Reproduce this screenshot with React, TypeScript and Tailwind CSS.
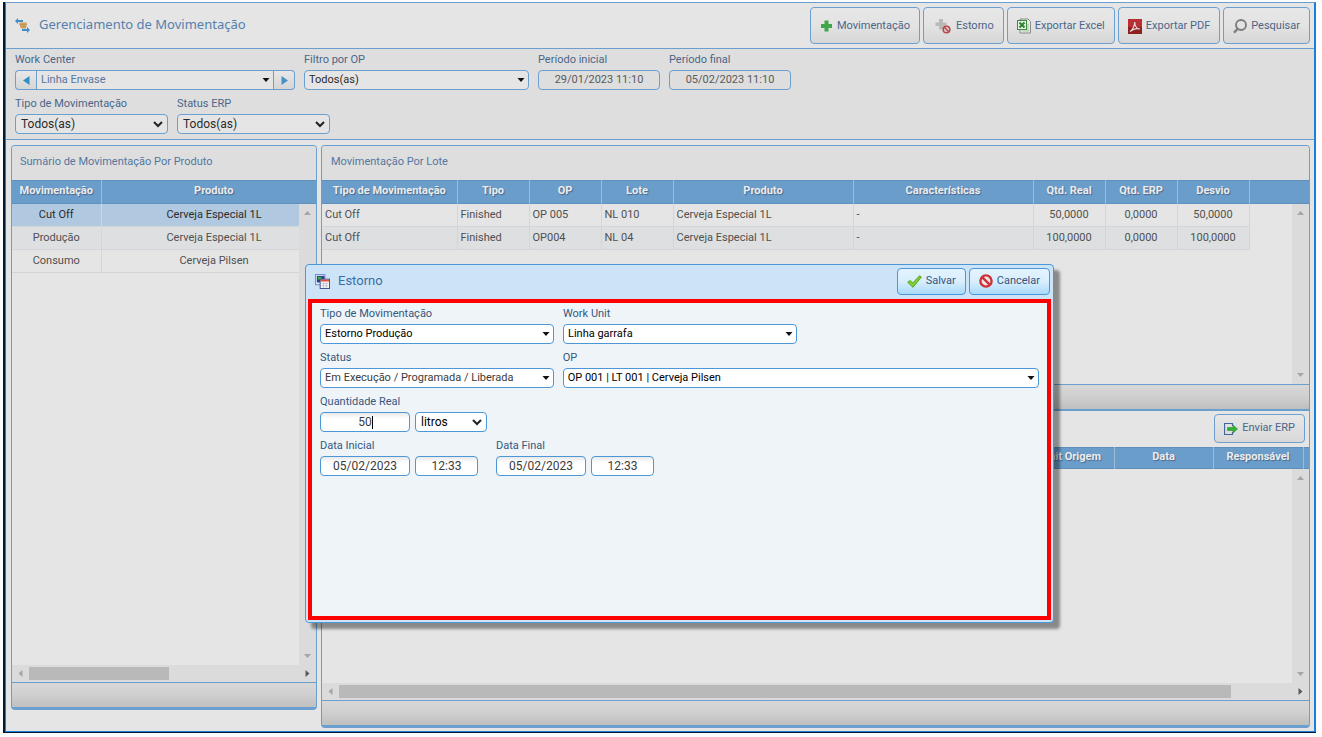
import React, { useState } from "react";

const MovementIcon = () => (
  <svg width="15" height="15" viewBox="0 0 15 15">
    <path d="M0 3l3-3v2h5v2H3v2z" fill="#3f8fd0" />
    <path d="M15 12l-3-3v2H7v2h5v2z" fill="#3f8fd0" />
    <path d="M4 4.500h8l-1 6H6z" fill="#d2a05f" />
    <path d="M4 6.500h8M5 8.500h6" stroke="#b88a50" strokeWidth="0.500" />
  </svg>
);

const PlusIcon = () => (
  <svg width="13" height="14" viewBox="0 0 13 14">
    <path d="M4.500 1.500h4V5H12v4H8.500v3.500h-4V9H1V5h3.500z" fill="#3fa64b" />
  </svg>
);

const ReverseIcon = () => (
  <svg className="mx-px" width="17" height="16" viewBox="0 0 17 16">
    <path d="M5 1h4v3.500h3.500V8H9v3.500H5V8H1.500V4.500H5z" fill="#b9b9b9" />
    <circle cx="12.500" cy="11.500" r="3.300" fill="#e3d3d3" stroke="#b94a4a" strokeWidth="1.600" />
    <path d="M10.200 9.200l4.600 4.600" stroke="#b94a4a" strokeWidth="1.600" />
  </svg>
);

const ExcelIcon = () => (
  <svg width="14" height="16" viewBox="0 0 14 16">
    <path d="M3 1h8l2.500 2.500V15H3z" fill="#e9e9e9" stroke="#8a8a8a" />
    <path d="M11 6v7M5 13h7" stroke="#a9c8a9" />
    <rect x="0.500" y="2.500" width="9" height="9" fill="#e8f1e8" stroke="#3b8a3f" />
    <path d="M2.500 4.500l5 5M7.500 4.500l-5 5" stroke="#2f8535" strokeWidth="2.200" />
  </svg>
);

const PdfIcon = () => (
  <svg width="14" height="15" viewBox="0 0 14 15">
    <rect width="14" height="15" fill="#b83034" />
    <rect y="8" width="14" height="7" fill="#8f2022" />
    <path
      d="M2 12.500c2-1 4.500-5 4.800-9.500 0 4 2 6.800 5.200 7-3.500-1-6.500-.5-10 2.500z"
      fill="none"
      stroke="#e9dcdc"
      strokeWidth="1.100"
    />
  </svg>
);

const SearchIcon = () => (
  <svg width="14" height="15" viewBox="0 0 14 15">
    <circle cx="8" cy="6" r="5" fill="none" stroke="#7d7d7d" strokeWidth="1.900" />
    <path d="M4.600 9.800L1 13.800" stroke="#7d7d7d" strokeWidth="2.400" />
  </svg>
);

const SendIcon = () => (
  <svg width="14" height="12" viewBox="0 0 14 12">
    <path d="M8.500 3V0.500H0.500v11h8V9" fill="none" stroke="#3f679c" strokeWidth="1.200" />
    <path d="M3.500 4.500H9V2l4.500 4L9 10V7.500H3.500z" fill="#34b233" stroke="#2a8a2c" strokeWidth="0.600" />
  </svg>
);

const DialogIcon = () => (
  <svg width="15" height="15" viewBox="0 0 16 16">
    <rect x="0.500" y="0.500" width="10" height="11" fill="#dfe9f8" stroke="#6f8ad0" />
    <rect x="2" y="2" width="8" height="7" fill="#2c3c86" />
    <rect x="3" y="3" width="4" height="3" fill="#34b24a" />
    <rect x="5.500" y="5.500" width="10" height="10" fill="#f4f4f8" stroke="#3d4a8c" />
    <rect x="6" y="6" width="9" height="2" fill="#e0503c" />
    <path d="M7 10h7M7 12.500h7M9 9v6M12 9v6" stroke="#b9bcc9" strokeWidth="0.800" />
  </svg>
);

const CheckIcon = () => (
  <svg width="15" height="13" viewBox="0 0 15 13">
    <path
      d="M0.700 7.300l2.400-1.800 2.700 2.400L12.500 0.800l1.900 1.300L6 12.300z"
      fill="#7fd02f"
      stroke="#4f9a1c"
      strokeWidth="0.900"
    />
  </svg>
);

const CancelIcon = () => (
  <svg width="14" height="14" viewBox="0 0 14 14">
    <circle cx="7" cy="7" r="5.600" fill="#f6e4e6" stroke="#cb3338" strokeWidth="2.400" />
    <path d="M3.200 3.200l7.600 7.600" stroke="#cb3338" strokeWidth="2.400" />
  </svg>
);

const Caret = () => (
  <svg
    className="pointer-events-none absolute right-1 top-2"
    width="8"
    height="5"
    viewBox="0 0 8 5"
  >
    <path d="M0.500 0h7L4 4z" fill="#111" />
  </svg>
);

const Chevron = () => (
  <svg
    className="pointer-events-none absolute right-[5px] top-[7px]"
    width="10"
    height="7"
    viewBox="0 0 10 7"
  >
    <path d="M1 1l4 4 4-4" fill="none" stroke="#222" strokeWidth="2" />
  </svg>
);

const Field = ({ id, label, width, children }: any) => (
  <div className={`flex flex-col ${width}`}>
    <label htmlFor={id} className="text-[11px] leading-5 whitespace-nowrap">
      {label}
    </label>
    {children}
  </div>
);

const Select = ({ id, value, native, label, className = "" }: any) => (
  <div className="relative flex-1">
    <select
      id={id}
      aria-label={label}
      defaultValue={value}
      className={`block w-full h-5 appearance-none border outline-none pr-4 ${native ? "pl-[5px] text-[12px]" : "pl-1 text-[11px]"} ${className}`}
    >
      <option>{value}</option>
    </select>
    {native ? <Chevron /> : <Caret />}
  </div>
);

const ToolButton = ({ icon, label }: any) => (
  <button className="h-[37px] pt-px px-[9px] flex items-center gap-1 rounded border border-[#6a9fd0] bg-linear-to-b from-[#e7e7e7] via-[#e3e3e3] to-[#d6d6d6] text-[11px] text-[#4b6689] whitespace-nowrap">
    {icon}
    {label}
  </button>
);

const DialogButton = ({ icon, label }: any) => (
  <button className="h-[27px] px-[9px] flex items-center gap-1 rounded border border-[#4b97d8] bg-linear-to-b from-[#e4f3fe] via-[#d8eefd] to-[#a9dafa] text-[11px] text-[#33557d] whitespace-nowrap">
    {icon}
    {label}
  </button>
);

const Arrow = ({ d, dark }: any) => (
  <svg className="shrink-0" width="17" height="17" viewBox="0 0 17 17">
    <path d={d} fill={dark ? "#5a5a5a" : "#a6a6a6"} />
  </svg>
);

const VerticalScroll = ({ className }: any) => (
  <div className={`absolute right-0 bottom-0 w-[17px] bg-[#dbdbdb] flex flex-col justify-between ${className}`}>
    <Arrow d="M5 11l3.500-4 3.500 4z" />
    <Arrow d="M5 6l3.500 4 3.500-4z" />
  </div>
);

const HorizontalScroll = ({ thumb }: any) => (
  <div className="h-[17px] bg-[#dbdbdb] flex items-center">
    <Arrow d="M10.500 5l-4 3.500 4 3.500z" />
    <div className="flex-1">
      <div className={`h-[13px] bg-[#b9b9b9] ${thumb}`} />
    </div>
    <Arrow d="M6.500 5l4 3.500-4 3.500z" dark />
  </div>
);

const PanelFooter = () => (
  <div className="h-6 border-t border-[#6a9fd0] bg-linear-to-b from-[#d8d8d8] via-[#cfcfcf] to-[#bfbfbf] box-content" />
);

const HEAD_ROW =
  "bg-[#6b9dcb] border-y border-[#5f8fbd] text-[11px] text-[#ececec] [text-shadow:1px_1px_1px_rgba(50,70,100,0.6)]";
const HEAD_CELL = "pt-0 px-0 pb-[2px] leading-[18px] font-bold border-r border-[#9cbcdb] whitespace-nowrap";

const SUMMARY = [
  { type: "Cut Off", product: "Cerveja Especial 1L" },
  { type: "Produção", product: "Cerveja Especial 1L" },
  { type: "Consumo", product: "Cerveja Pilsen" },
];

const LOT_COLUMNS = [
  { title: "Tipo de Movimentação", width: "w-[135px]" },
  { title: "Tipo", width: "w-[72px]" },
  { title: "OP", width: "w-[72px]" },
  { title: "Lote", width: "w-[72px]" },
  { title: "Produto", width: "w-[180px]" },
  { title: "Características", width: "w-[180px]" },
  { title: "Qtd. Real", width: "w-[72px]" },
  { title: "Qtd. ERP", width: "w-[72px]" },
  { title: "Desvio", width: "w-[72px]" },
];

const LOTS = [
  ["Cut Off", "Finished", "OP 005", "NL 010", "Cerveja Especial 1L", "-", "50,0000", "0,0000", "50,0000"],
  ["Cut Off", "Finished", "OP004", "NL 04", "Cerveja Especial 1L", "-", "100,0000", "0,0000", "100,0000"],
];

const FILTER_BOX = "border-[#6a9fd0] bg-[#e5e5e5]";
const FORM_BOX = "rounded border-[#4b97d8] bg-white";

const SummaryPanel = () => {
  const [selected, setSelected] = useState(0);

  return (
    <section className="w-[306px] shrink-0 mb-[18px] flex flex-col rounded border border-b-3 border-[#6a9fd0] overflow-hidden">
      <h2 className="h-[34px] px-2 leading-8 bg-[#dedede] text-[11px] text-[#5577a0]">
        Sumário de Movimentação Por Produto
      </h2>
      <div className="relative flex-1 overflow-hidden">
        <table className="w-[315px] table-fixed border-collapse">
          <thead>
            <tr className={HEAD_ROW}>
              <th className={`${HEAD_CELL} h-[23px] w-[89px]`}>Movimentação</th>
              <th className={`${HEAD_CELL} h-[23px]`}>Produto</th>
            </tr>
          </thead>
          <tbody className="text-[11px] text-center">
            {SUMMARY.map((row, idx) => (
              <tr
                key={idx}
                onClick={() => setSelected(idx)}
                className={`border-b border-[#d2d5da] ${
                  idx === selected
                    ? "bg-[#b1c9e0] text-[#2b2b2b]"
                    : idx === 1
                      ? "bg-[#dddfe1] text-[#505050]"
                      : "text-[#505050]"
                }`}
              >
                <td className="h-[23px] p-0 border-r border-[#d2d5da]">{row.type}</td>
                <td className="h-[23px] p-0">{row.product}</td>
              </tr>
            ))}
          </tbody>
        </table>
        <VerticalScroll className="top-6" />
      </div>
      <HorizontalScroll thumb="w-[140px]" />
      <PanelFooter />
    </section>
  );
};

const LotPanel = () => (
  <section className="flex-1 min-w-0 flex flex-col rounded border border-b-3 border-[#6a9fd0] overflow-hidden">
    <h2 className="h-[34px] px-[9px] leading-8 bg-[#dedede] text-[11px] text-[#5577a0]">
      Movimentação Por Lote
    </h2>
    <div className="relative h-[204px] overflow-hidden">
      <table className="w-full table-fixed border-collapse">
        <thead>
          <tr className={HEAD_ROW}>
            {LOT_COLUMNS.map((col) => (
              <th key={col.title} className={`${HEAD_CELL} h-[23px] ${col.width}`}>
                {col.title}
              </th>
            ))}
            <td />
          </tr>
        </thead>
        <tbody className="text-[11px] text-[#505050]">
          {LOTS.map((row, idx) => (
            <tr key={idx}>
              {row.map((cell, i) => (
                <td
                  key={i}
                  className={`h-[23px] py-0 border-r border-b border-[#d2d5da] ${i > 5 ? "text-center" : "px-[3px]"} ${
                    idx % 2 ? "bg-[#dddfe1]" : ""
                  }`}
                >
                  {cell}
                </td>
              ))}
            </tr>
          ))}
        </tbody>
      </table>
      <VerticalScroll className="top-6" />
    </div>
    <PanelFooter />
    <div className="h-[38px] pt-[3px] px-1 flex items-start justify-end border-t-2 border-[#6a9fd0]">
      <button className="h-[29px] px-[9px] flex items-center gap-1 rounded border border-[#6a9fd0] bg-linear-to-b from-[#e7e7e7] to-[#d9d9d9] text-[11px] text-[#4b6689] whitespace-nowrap">
        <SendIcon />
        Enviar ERP
      </button>
    </div>
    <div className="relative flex-1">
      <table className="w-full table-fixed border-collapse">
        <thead>
          <tr className={HEAD_ROW}>
            <td className={`${HEAD_CELL} h-5`} />
            <th className={`${HEAD_CELL} h-5 w-[85px]`}>Unit Origem</th>
            <th className={`${HEAD_CELL} h-5 w-[99px]`}>Data</th>
            <th className={`${HEAD_CELL} h-5 w-[90px]`}>Responsável</th>
            <td className="w-[6px]" />
          </tr>
        </thead>
      </table>
      <VerticalScroll className="top-[22px]" />
    </div>
    <HorizontalScroll thumb="mr-[61px]" />
    <PanelFooter />
  </section>
);

const Filters = () => (
  <div className="flex flex-col gap-1 px-[9px] pt-px pb-[5px] bg-[#dedede] border-b border-[#6a9fd0] text-[#4b6689]">
    <div className="flex gap-[9px]">
      <Field id="workCenter" label="Work Center" width="w-[280px]">
        <div className="flex">
          <button
            aria-label="Anterior"
            className="w-[21px] h-5 flex items-center justify-center rounded-l border border-r-0 border-[#6a9fd0] bg-linear-to-b from-[#e7e7e7] to-[#d6d6d6]"
          >
            <svg width="7" height="9" viewBox="0 0 7 9">
              <path d="M6.500 0v9L0 4.500z" fill="#2f8fc4" />
            </svg>
          </button>
          <Select id="workCenter" value="Linha Envase" className={`${FILTER_BOX} text-[#5577a0]`} />
          <button
            aria-label="Próximo"
            className="w-[21px] h-5 flex items-center justify-center rounded-r border border-l-0 border-[#6a9fd0] bg-linear-to-b from-[#e7e7e7] to-[#d6d6d6]"
          >
            <svg width="7" height="9" viewBox="0 0 7 9">
              <path d="M0.500 0v9L7 4.500z" fill="#4a90c4" />
            </svg>
          </button>
        </div>
      </Field>
      <Field id="opFilter" label="Filtro por OP" width="w-[225px]">
        <Select id="opFilter" value="Todos(as)" className={`${FILTER_BOX} rounded text-[#2b2b2b]`} />
      </Field>
      <Field id="periodStart" label="Período inicial" width="w-[122px]">
        <input
          id="periodStart"
          defaultValue="29/01/2023 11:10"
          className="h-5 w-full pb-[2px] rounded border border-[#6a9fd0] text-[11px] text-center text-[#5a5a5a] outline-none"
        />
      </Field>
      <Field id="periodEnd" label="Período final" width="w-[122px]">
        <input
          id="periodEnd"
          defaultValue="05/02/2023 11:10"
          className="h-5 w-full pb-[2px] rounded border border-[#6a9fd0] text-[11px] text-center text-[#5a5a5a] outline-none"
        />
      </Field>
    </div>
    <div className="flex gap-[9px]">
      <Field id="typeFilter" label="Tipo de Movimentação" width="w-[153px]">
        <Select id="typeFilter" value="Todos(as)" native className={`${FILTER_BOX} rounded text-[#2b2b2b]`} />
      </Field>
      <Field id="erpFilter" label="Status ERP" width="w-[153px]">
        <Select id="erpFilter" value="Todos(as)" native className={`${FILTER_BOX} rounded text-[#2b2b2b]`} />
      </Field>
    </div>
  </div>
);

const TextBox = ({ id, value, label, width }: any) => (
  <input
    id={id}
    aria-label={label}
    defaultValue={value}
    className={`block h-5 ${width} rounded border border-[#4b97d8] bg-linear-to-b from-[#e8e8e8] via-white via-30% to-white text-[12px] text-center text-[#3b3b3b] caret-transparent outline-none`}
  />
);

const ReversalDialog = () => (
  <div
    role="dialog"
    aria-label="Estorno"
    className="absolute left-[305px] top-[264px] w-[749px] flex flex-col rounded border border-[#4b97d8] bg-[#cde4f8] shadow-[6px_6px_3px_rgba(0,0,0,0.4)]"
  >
    <div className="h-[34px] pl-[9px] pr-[3px] pb-[2px] flex items-center gap-2">
      <DialogIcon />
      <h2 className="flex-1 text-[13px] text-[#3a6ea5]">Estorno</h2>
      <div className="flex gap-[3px]">
        <DialogButton icon={<CheckIcon />} label="Salvar" />
        <DialogButton icon={<CancelIcon />} label="Cancelar" />
      </div>
    </div>
    <form className="mx-[2px] mb-[2px] h-[321px] pt-px px-2 flex flex-col gap-1 border-4 border-[#ff0000] bg-[#eff4f9] text-[#35587f]">
      <div className="flex gap-[9px]">
        <Field id="movType" label="Tipo de Movimentação" width="w-[234px]">
          <Select id="movType" value="Estorno Produção" className={`${FORM_BOX} text-black`} />
        </Field>
        <Field id="workUnit" label="Work Unit" width="w-[234px]">
          <Select id="workUnit" value="Linha garrafa" className={`${FORM_BOX} text-black`} />
        </Field>
      </div>
      <div className="flex gap-[9px]">
        <Field id="status" label="Status" width="w-[234px]">
          <Select id="status" value="Em Execução / Programada / Liberada" className={`${FORM_BOX} text-[#3b3b3b]`} />
        </Field>
        <Field id="op" label="OP" width="w-[477px]">
          <Select id="op" value="OP 001 | LT 001 | Cerveja Pilsen" className={`${FORM_BOX} text-black`} />
        </Field>
      </div>
      <Field id="amount" label="Quantidade Real" width="w-[167px]">
        <div className="flex gap-[5px]">
          <div className="relative">
            <TextBox id="amount" value="50" width="w-[90px]" />
            <span className="pointer-events-none absolute left-[52px] top-1 h-[13px] w-px bg-black" />
          </div>
          <Select label="Unidade" value="litros" native className={`${FORM_BOX} text-black`} />
        </div>
      </Field>
      <div className="flex gap-[18px]">
        <Field id="startDate" label="Data Inicial" width="w-[158px]">
          <div className="flex gap-[5px]">
            <TextBox id="startDate" value="05/02/2023" width="w-[90px]" />
            <TextBox label="Hora inicial" value="12:33" width="w-[63px]" />
          </div>
        </Field>
        <Field id="endDate" label="Data Final" width="w-[158px]">
          <div className="flex gap-[5px]">
            <TextBox id="endDate" value="05/02/2023" width="w-[90px]" />
            <TextBox label="Hora final" value="12:33" width="w-[63px]" />
          </div>
        </Field>
      </div>
    </form>
  </div>
);

const App = () => (
  <div className="relative min-h-screen flex flex-col pt-[2px] pl-[3px] pr-[6px] pb-1 bg-[#fcfcfc] font-[Roboto,sans-serif]">
    <div className="flex-1 flex flex-col border-l-2 border-b border-[#001a33]">
      <div className="flex-1 flex flex-col border border-r-2 border-t-[#6a9fd0] border-x-[#1c7fd6] border-b-[#1c7fd6] bg-[#e5e5e5]">
        <header className="h-[46px] pl-[9px] pr-1 flex items-center gap-[9px] border-b border-[#6a9fd0]">
          <MovementIcon />
          <h1 className="flex-1 pb-[2px] font-['Noto_Sans',sans-serif] text-[13px] text-[#5580ad]">
            Gerenciamento de Movimentação
          </h1>
          <div className="flex gap-[3px]">
            <ToolButton icon={<PlusIcon />} label="Movimentação" />
            <ToolButton icon={<ReverseIcon />} label="Estorno" />
            <ToolButton icon={<ExcelIcon />} label="Exportar Excel" />
            <ToolButton icon={<PdfIcon />} label="Exportar PDF" />
            <ToolButton icon={<SearchIcon />} label="Pesquisar" />
          </div>
        </header>
        <Filters />
        <main className="flex-1 flex gap-1 pl-[5px] pr-1 pt-[5px] pb-[3px]">
          <SummaryPanel />
          <LotPanel />
        </main>
      </div>
    </div>
    <ReversalDialog />
  </div>
);

export default App;
